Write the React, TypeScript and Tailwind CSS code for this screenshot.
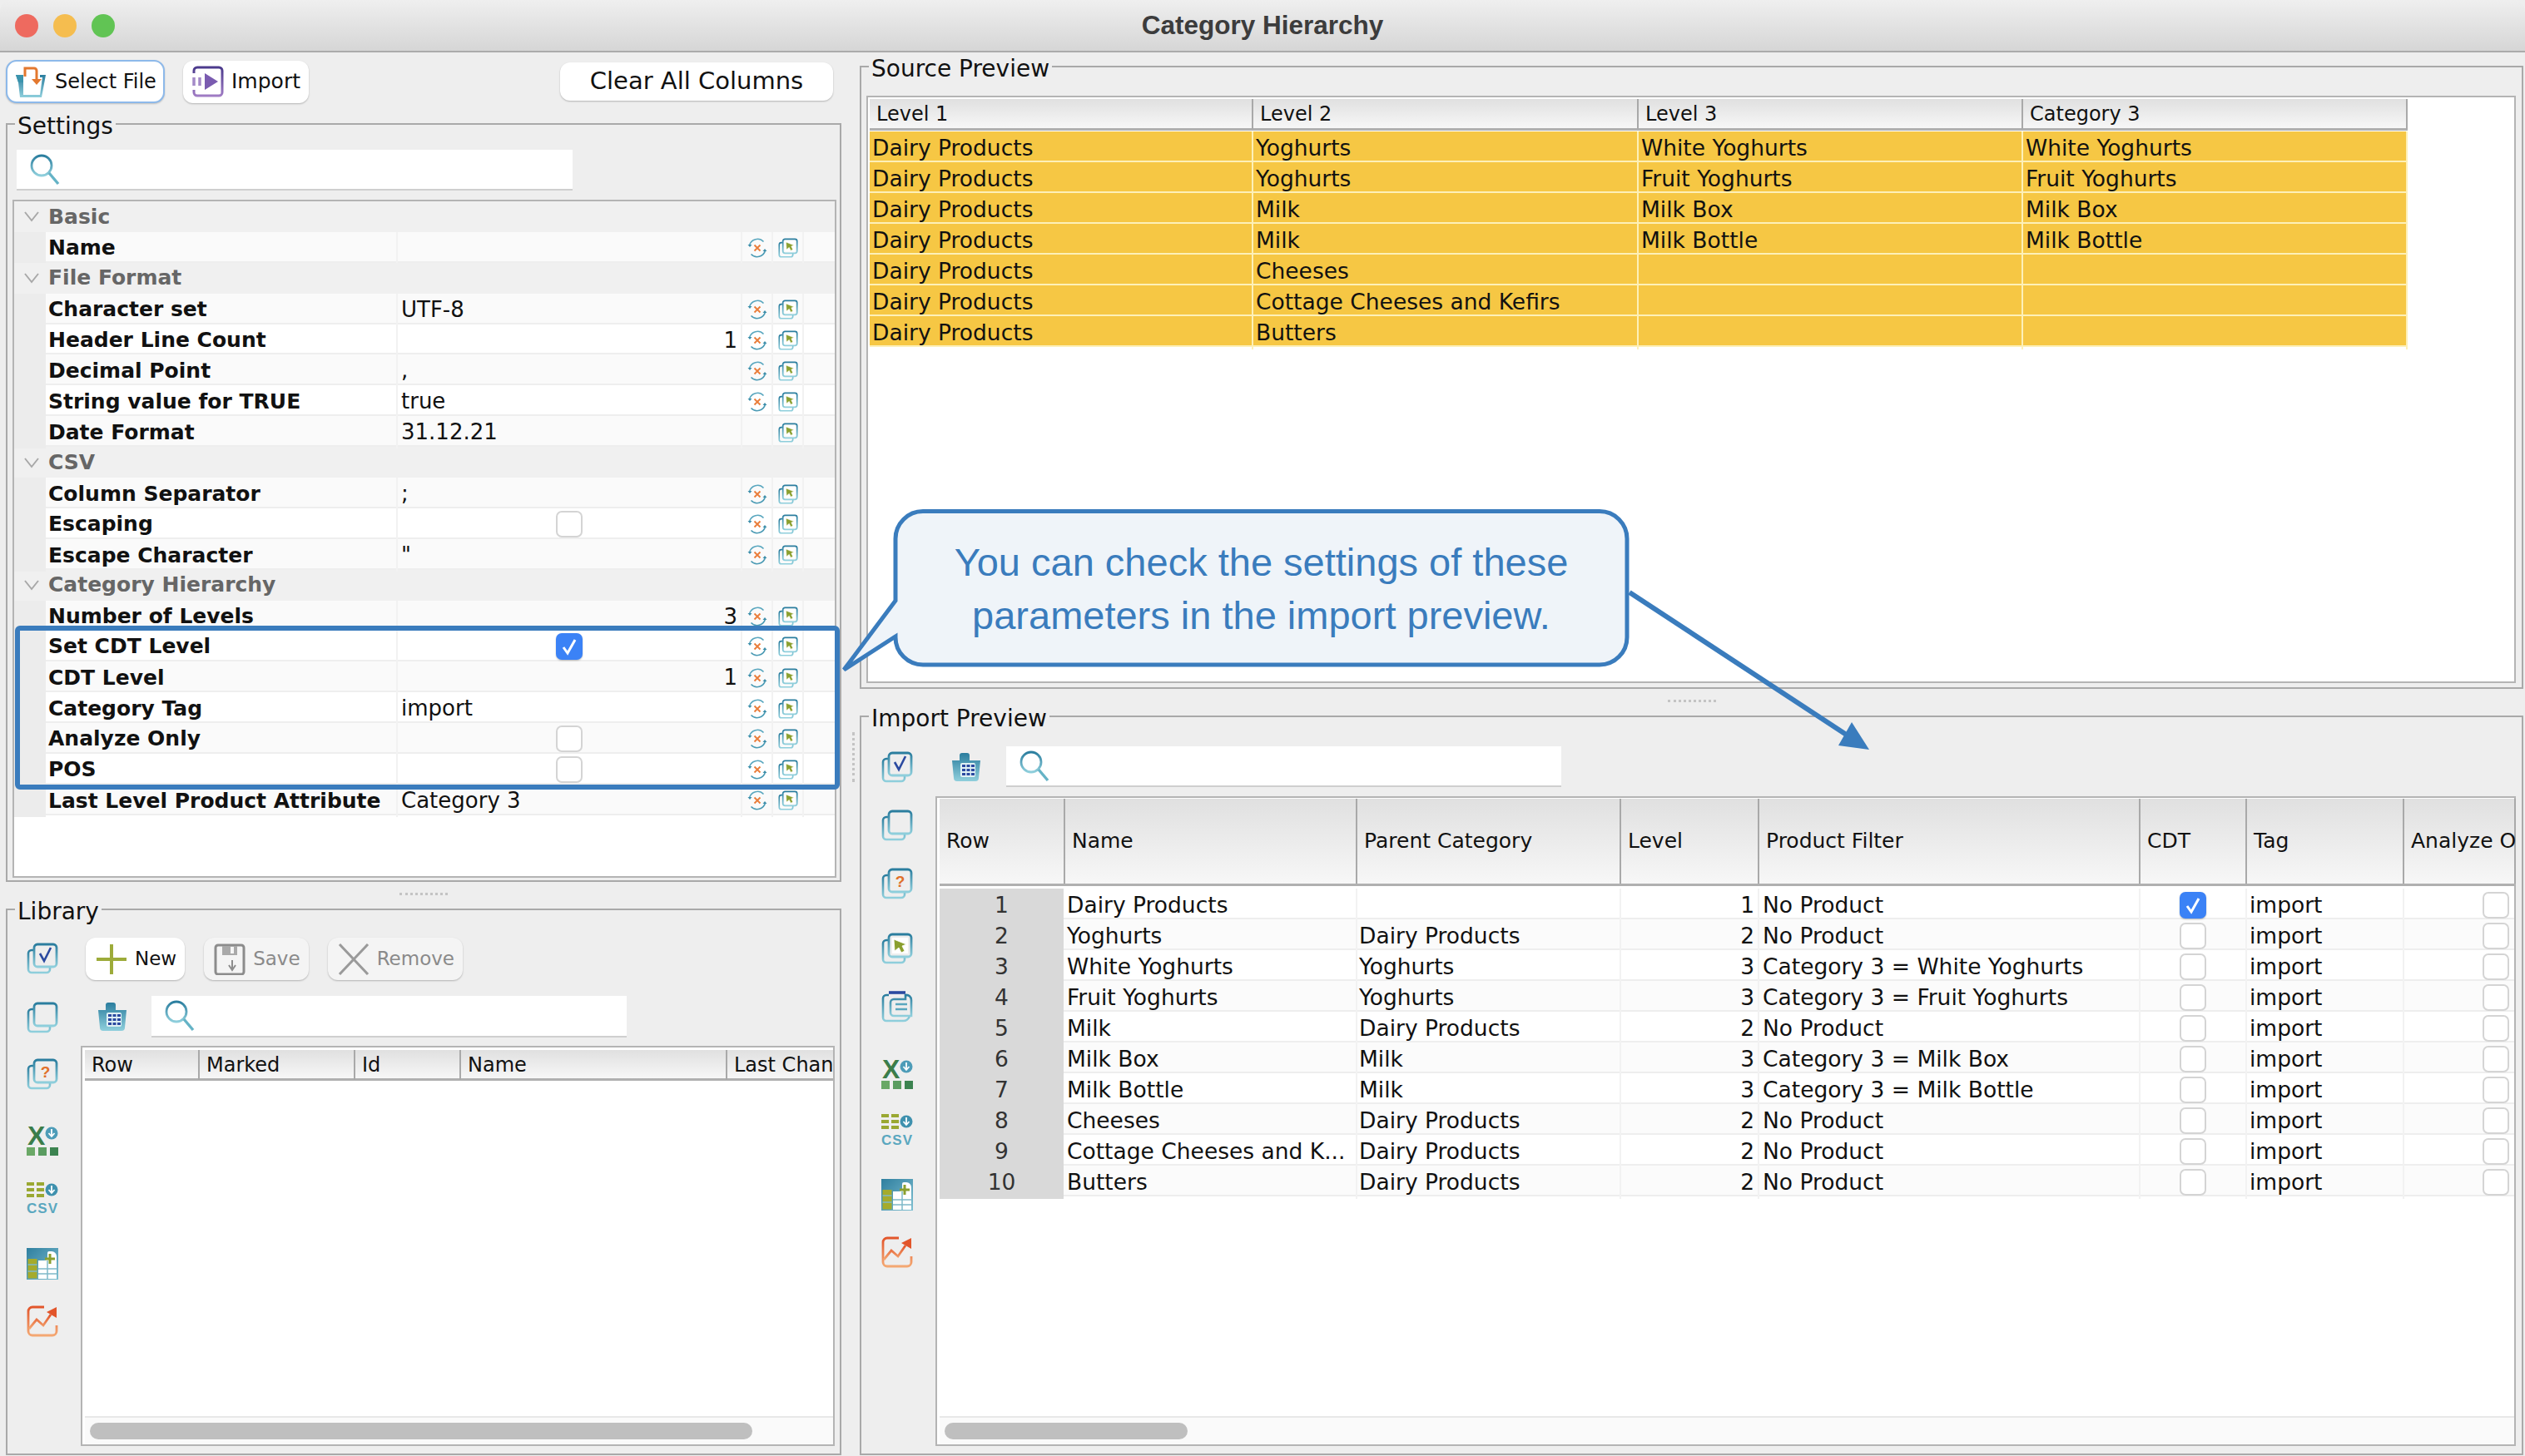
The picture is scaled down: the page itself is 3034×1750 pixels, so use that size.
import type { ReactNode } from 'react'

function Defs() {
  return (
    <svg className="absolute w-0 h-0" aria-hidden="true">
      <defs>
        <linearGradient id="teal" x1="0" y1="0" x2="0" y2="1">
          <stop offset="0" stopColor="#2a7d9e" />
          <stop offset="1" stopColor="#8fcfdc" />
        </linearGradient>
        <linearGradient id="purple" x1="0" y1="0" x2="0" y2="1">
          <stop offset="0" stopColor="#4b3a8c" />
          <stop offset="1" stopColor="#a07cc4" />
        </linearGradient>
        <linearGradient id="orange" x1="0" y1="0" x2="0" y2="1">
          <stop offset="0" stopColor="#e2552a" />
          <stop offset="1" stopColor="#f4a873" />
        </linearGradient>
        <linearGradient id="tablebg" x1="0" y1="0" x2="1" y2="1">
          <stop offset="0" stopColor="#2f7f9f" />
          <stop offset="1" stopColor="#7fc0d2" />
        </linearGradient>
      </defs>
    </svg>
  )
}

function Pages({ size = 38, children }: { size?: number; children?: ReactNode }) {
  return (
    <svg width={size} height={size} viewBox="0 0 38 38" fill="none" className="shrink-0">
      <path d="M9 9H6a4 4 0 0 0-4 4v19a4 4 0 0 0 4 4h18a4 4 0 0 0 4-4v-3" stroke="url(#teal)" strokeWidth="2.6" />
      <rect x="9" y="2" width="27" height="27" rx="4" stroke="url(#teal)" strokeWidth="2.8" />
      {children}
    </svg>
  )
}

const PagesCheck = () => (
  <Pages><path d="M16 13l5 9 8-16" stroke="#2b4aa0" strokeWidth="2.6" /></Pages>
)
const PagesEmpty = () => <Pages />
const PagesQuestion = () => (
  <Pages><text x="22.5" y="23" textAnchor="middle" fontSize="19" fontWeight="700" fill="#e0702a" fontFamily="Liberation Sans, sans-serif">?</text></Pages>
)
const PagesCursor = ({ size = 38 }: { size?: number }) => (
  <Pages size={size}>
    <rect x="13" y="6" width="19" height="19" fill="#fff" />
    <path d="M15 8l15 6-5 2 3 6-4 2-3-6-5 4z" fill="#8a9f2e" stroke="#fff" strokeWidth="0.8" />
  </Pages>
)

const ClipDoc = () => (
  <svg width="38" height="38" viewBox="0 0 38 38" fill="none" className="shrink-0">
    <path d="M9 5H6a4 4 0 0 0-4 4v23a4 4 0 0 0 4 4h20a8 8 0 0 0 8-6" stroke="url(#teal)" strokeWidth="2.6" />
    <path d="M9 2h20" stroke="#2b4aa0" strokeWidth="3.6" />
    <path d="M29 5a6 6 0 0 1 7 6v19H15a4 4 0 0 1-4-4V14a4 4 0 0 1 4-4h14z" stroke="url(#teal)" strokeWidth="2.6" />
    <path d="M17 16h14M17 22h14" stroke="#5aa7bf" strokeWidth="2.6" />
  </svg>
)

const ClipTable = () => (
  <svg width="38" height="38" viewBox="0 0 38 38" fill="none" className="shrink-0">
    <path d="M2 11h9V5a3 3 0 0 1 3-3h6a3 3 0 0 1 3 3v6h13l-2 21a4 4 0 0 1-4 4H8a4 4 0 0 1-4-4z" fill="url(#teal)" />
    <rect x="12" y="14" width="18" height="17" rx="2" fill="#dff0f4" />
    <path d="M14 16h4v3h-4zM19.500 16h4v3h-4zM25 16h4v3h-4zM14 21h4v3h-4zM19.500 21h4v3h-4zM25 21h4v3h-4zM14 26h4v3h-4zM19.500 26h4v3h-4zM25 26h4v3h-4z" fill="#2b4aa0" />
  </svg>
)

const ExcelDown = () => (
  <svg width="38" height="38" viewBox="0 0 38 38" className="shrink-0">
    <text x="1" y="25" fontSize="32" fontWeight="700" fill="#3b7d4a" fontFamily="Liberation Sans, sans-serif">X</text>
    <circle cx="30" cy="11" r="7.5" fill="#4d9cb8" />
    <path d="M30 6v8M26.5 11l3.5 4 3.5-4" stroke="#fff" strokeWidth="1.8" fill="none" />
    <rect x="0" y="28" width="10" height="10" fill="#6aa866" />
    <rect x="14" y="28" width="10" height="10" fill="#5a9c60" />
    <rect x="28" y="28" width="10" height="10" fill="#3c8350" />
  </svg>
)

const CsvDown = () => (
  <svg width="38" height="38" viewBox="0 0 38 38" className="shrink-0">
    <path d="M0 0h9v4H0zM12 0h9v4h-9zM0 7h9v4H0zM12 7h9v4h-9zM0 14h9v4H0zM12 14h9v4h-9z" fill="#9aa832" />
    <circle cx="30" cy="9" r="7.5" fill="#3f91ae" />
    <path d="M30 4v8M26.5 9l3.5 4 3.5-4" stroke="#fff" strokeWidth="1.8" fill="none" />
    <text x="19" y="37" textAnchor="middle" fontSize="17" fontWeight="700" fill="#5aa7bf" letterSpacing="1" fontFamily="Liberation Sans, sans-serif">CSV</text>
  </svg>
)

const TablePlus = () => (
  <svg width="38" height="38" viewBox="0 0 38 38" className="shrink-0">
    <rect width="38" height="38" fill="url(#tablebg)" />
    <rect x="1.5" y="13" width="11" height="23.5" fill="#a5ab2c" />
    <path d="M14 37V15h7a4 4 0 0 0 4-4V6a2 2 0 0 1 2-2h3a6 6 0 0 1 6 6v27z" fill="#fff" />
    <path d="M14 25h23M14 31h23M25 15v22M1.5 20h11M1.5 28h11" stroke="#7fb9c9" strokeWidth="1.5" />
    <path d="M28 7v12M22 13h12" stroke="#8a9f2e" strokeWidth="3" />
  </svg>
)

const ChartUp = () => (
  <svg width="38" height="38" viewBox="0 0 38 38" fill="none" className="shrink-0">
    <path d="M21 2H7a5 5 0 0 0-5 5v24a5 5 0 0 0 5 5h24a5 5 0 0 0 5-5v-7" stroke="url(#orange)" strokeWidth="2.8" />
    <path d="M3 28l9-11 8 7 9-13" stroke="url(#orange)" strokeWidth="2.8" />
    <path d="M24 8l12-6v13z" fill="#e2552a" />
  </svg>
)

const Search = () => (
  <svg width="38" height="38" viewBox="0 0 38 38" fill="none" className="shrink-0">
    <circle cx="15" cy="14" r="12" stroke="url(#teal)" strokeWidth="2.8" />
    <path d="M24 23l11 13" stroke="#65b3c6" strokeWidth="3.4" />
  </svg>
)

const ResetIcon = () => (
  <svg width="24" height="24" viewBox="0 0 24 24" fill="none">
    <path d="M2.500 9A10 10 0 0 1 19.500 4.500" stroke="#5aa7bf" strokeWidth="1.6" />
    <path d="M21.500 15A10 10 0 0 1 4.500 19.500" stroke="#4a9ab4" strokeWidth="1.6" />
    <path d="M0.500 8l2.500 3 2.500-3zM18.500 16l2.500-3 2.500 3z" fill="#3f8faa" />
    <path d="M8.500 8.500l7 7M15.500 8.500l-7 7" stroke="#ea7d3a" strokeWidth="1.9" />
  </svg>
)

const SelectFile = () => (
  <svg width="38" height="38" viewBox="0 0 38 38" fill="none" className="shrink-0">
    <path d="M9 11H0l3 9 2 18h26l5-27h-7v3h3l-3 21H9z" fill="url(#teal)" />
    <path d="M9 11H0l3 9h6z" fill="#3b93ad" />
    <path d="M11 13V3h11a3 3 0 0 1 3 3v13" stroke="#e3782f" strokeWidth="3" />
    <path d="M19 16l6 7 6-7" fill="#e3782f" />
  </svg>
)

const ImportIcon = () => (
  <svg width="38" height="38" viewBox="0 0 38 38" fill="none" className="shrink-0">
    <path d="M2 9V6a4 4 0 0 1 4-4h26a4 4 0 0 1 4 4v26a4 4 0 0 1-4 4H6a4 4 0 0 1-4-4v-3" stroke="url(#purple)" strokeWidth="3" />
    <path d="M2 14v10M9 14v10" stroke="#a48ac8" strokeWidth="3.5" />
    <path d="M15 9l16 10-16 10z" fill="#7a5bb0" />
  </svg>
)

const Plus = () => (
  <svg width="38" height="38" viewBox="0 0 38 38" className="shrink-0">
    <path d="M19 1v36M1 19h36" stroke="#9dab3a" strokeWidth="4" />
  </svg>
)

const Floppy = () => (
  <svg width="38" height="38" viewBox="0 0 38 38" fill="none" className="shrink-0">
    <path d="M5 2h28a3 3 0 0 1 3 3v29a3 3 0 0 1-3 3H5a3 3 0 0 1-3-3V5a3 3 0 0 1 3-3z" stroke="#8c8c8c" strokeWidth="3" />
    <rect x="10" y="3" width="18" height="11" fill="#a9a9a9" />
    <rect x="20" y="4" width="4" height="8" fill="#f5f5f5" />
    <path d="M22 20v10M18 26l4 6 4-6" stroke="#8c8c8c" strokeWidth="2" />
  </svg>
)

const Cross = () => (
  <svg width="38" height="38" viewBox="0 0 38 38" className="shrink-0">
    <path d="M2 1l34 36M36 1L2 37" stroke="#9a9a9a" strokeWidth="3" />
  </svg>
)

function Check({ on }: { on?: boolean }) {
  if (on) {
    return (
      <span className="flex items-center justify-center w-[32px] h-[32px] rounded-[7px] bg-[#3b82f6] shadow-[0_1px_2px_rgba(0,0,0,0.25)]">
        <svg width="22" height="22" viewBox="0 0 22 22" fill="none">
          <path d="M4 12l5 7L18 3" stroke="#fff" strokeWidth="3" />
        </svg>
      </span>
    )
  }
  return <span className="block w-[32px] h-[32px] rounded-[7px] bg-white border-2 border-[#d4d4d4]" />
}

function GroupBox({ title, className, children }: { title: string; className: string; children: ReactNode }) {
  return (
    <fieldset className={`min-w-0 border-2 border-[#a9a9a9] ${className}`}>
      <legend className="ml-[9px] px-[3px] h-[32px] pt-[3px] leading-[32px] text-[28px] text-[#111]">{title}</legend>
      {children}
    </fieldset>
  )
}

function SearchBox({ className }: { className: string }) {
  return (
    <div className={`flex items-center pl-[15px] bg-white border-b-2 border-[#cfcfcf] ${className}`}>
      <Search />
    </div>
  )
}

function ToolButton({ icon, label, disabled }: { icon: ReactNode; label: string; disabled?: boolean }) {
  return (
    <button className={`flex items-center gap-[9px] h-[51px] pl-[12px] pr-[10px] rounded-[12px] text-[23px] shadow-[0_1px_2px_rgba(0,0,0,0.25)] ${disabled ? 'bg-[#f4f4f4] text-[#8a8a8a]' : 'bg-white text-[#111]'}`}>
      {icon}
      {label}
    </button>
  )
}

type PropRow =
  | { section: string }
  | { name: string; value?: string; num?: string; check?: boolean; noReset?: boolean }

const SETTINGS: PropRow[] = [
  { section: 'Basic' },
  { name: 'Name' },
  { section: 'File Format' },
  { name: 'Character set', value: 'UTF-8' },
  { name: 'Header Line Count', num: '1' },
  { name: 'Decimal Point', value: ',' },
  { name: 'String value for TRUE', value: 'true' },
  { name: 'Date Format', value: '31.12.21', noReset: true },
  { section: 'CSV' },
  { name: 'Column Separator', value: ';' },
  { name: 'Escaping', check: false },
  { name: 'Escape Character', value: '"' },
  { section: 'Category Hierarchy' },
  { name: 'Number of Levels', num: '3' },
  { name: 'Set CDT Level', check: true },
  { name: 'CDT Level', num: '1' },
  { name: 'Category Tag', value: 'import' },
  { name: 'Analyze Only', check: false },
  { name: 'POS', check: false },
  { name: 'Last Level Product Attribute', value: 'Category 3' },
]

function SettingsRow({ row, index }: { row: PropRow; index: number }) {
  if ('section' in row) {
    return (
      <div className="flex items-center h-[36.9px] bg-[#f0f0f0]">
        <svg width="20" height="14" viewBox="0 0 20 14" fill="none" className="ml-[11px] mr-[10px]">
          <path d="M2 2l8 10 8-10" stroke="#a8a8a8" strokeWidth="2" />
        </svg>
        <span className="text-[25px] font-bold text-[#666]">{row.section}</span>
      </div>
    )
  }
  const cell = 'flex items-center h-full border-r-2 border-[#f2f2f2] min-w-0'
  return (
    <div className={`grid grid-cols-[38px_423px_414px_37px_37px_1fr] h-[36.9px] border-b-2 border-[#eeeeee] ${index % 2 ? 'bg-[#fafafa]' : 'bg-white'}`}>
      <div className="h-full bg-[#ececec]" />
      <div className={`${cell} pl-[3px] text-[25px] font-bold text-[#111] whitespace-nowrap`}>{row.name}</div>
      <div className={`${cell} px-[4px] text-[26px] text-[#111] ${row.num ? 'justify-end' : ''} ${row.check !== undefined ? 'justify-center' : ''}`}>
        {row.value}
        {row.num}
        {row.check !== undefined && <Check on={row.check} />}
      </div>
      <div className={`${cell} justify-center`}>{!row.noReset && <ResetIcon />}</div>
      <div className={`${cell} justify-center`}><PagesCursor size={24} /></div>
      <div />
    </div>
  )
}

function HeadCell({ label, className }: { label: string; className?: string }) {
  return (
    <div className={`flex items-center h-full pl-[8px] border-r-2 border-[#a9a9a9] text-[25px] text-[#111] whitespace-nowrap ${className ?? ''}`}>
      {label}
    </div>
  )
}

const headBg = 'bg-gradient-to-b from-[#e0e0e0] to-[#f7f7f7] border-b-[3px] border-[#b0b0b0]'

function ScrollStrip({ thumb }: { thumb: string }) {
  return (
    <div className="flex items-center h-[34px] pl-[6px] bg-[#fafafa] border-t-2 border-[#e8e8e8]">
      <div className={`h-[20px] rounded-full bg-[#bfbfbf] ${thumb}`} />
    </div>
  )
}

const SOURCE_ROWS = [
  ['Dairy Products', 'Yoghurts', 'White Yoghurts', 'White Yoghurts'],
  ['Dairy Products', 'Yoghurts', 'Fruit Yoghurts', 'Fruit Yoghurts'],
  ['Dairy Products', 'Milk', 'Milk Box', 'Milk Box'],
  ['Dairy Products', 'Milk', 'Milk Bottle', 'Milk Bottle'],
  ['Dairy Products', 'Cheeses', '', ''],
  ['Dairy Products', 'Cottage Cheeses and Kefirs', '', ''],
  ['Dairy Products', 'Butters', '', ''],
]

const IMPORT_ROWS = [
  ['Dairy Products', '', '1', 'No Product'],
  ['Yoghurts', 'Dairy Products', '2', 'No Product'],
  ['White Yoghurts', 'Yoghurts', '3', 'Category 3 = White Yoghurts'],
  ['Fruit Yoghurts', 'Yoghurts', '3', 'Category 3 = Fruit Yoghurts'],
  ['Milk', 'Dairy Products', '2', 'No Product'],
  ['Milk Box', 'Milk', '3', 'Category 3 = Milk Box'],
  ['Milk Bottle', 'Milk', '3', 'Category 3 = Milk Bottle'],
  ['Cheeses', 'Dairy Products', '2', 'No Product'],
  ['Cottage Cheeses and K...', 'Dairy Products', '2', 'No Product'],
  ['Butters', 'Dairy Products', '2', 'No Product'],
]

const sourceCols = 'grid grid-cols-[461px_463px_462px_462px]'
const importCols = 'grid grid-cols-[151px_351px_317px_166px_458px_128px_189px_134px]'

function SourceTable() {
  return (
    <div className="h-[706px] ml-[6px] mr-[7px] mt-[19px] pl-[2px] pt-[2px] bg-white border-2 border-[#b4b4b4]">
      <div className={`${sourceCols} w-[1848px] h-[38px] ${headBg}`}>
        {['Level 1', 'Level 2', 'Level 3', 'Category 3'].map(h => <HeadCell key={h} label={h} className="!text-[24px]" />)}
      </div>
      <div className="mt-[1px] w-[1848px]">
        {SOURCE_ROWS.map((r, i) => (
          <div key={i} className={`${sourceCols} h-[37px] bg-[#f6c744] border-b-2 border-[#fdf0b8]`}>
            {r.map((c, j) => (
              <div key={j} className="flex items-center pl-[3px] border-r-2 border-[#fdf0b8] text-[26.500px] text-[#111] whitespace-nowrap">{c}</div>
            ))}
          </div>
        ))}
      </div>
    </div>
  )
}

function ImportTable() {
  return (
    <div className="flex flex-col h-[781px] mt-[11px] pl-[3px] pt-[1px] bg-white border-2 border-[#b4b4b4]">
      <div className={`${importCols} h-[105px] ${headBg}`}>
        {['Row', 'Name', 'Parent Category', 'Level', 'Product Filter', 'CDT', 'Tag', 'Analyze O'].map(h => <HeadCell key={h} label={h} />)}
      </div>
      <div className="flex-1 pt-[3px]">
        {IMPORT_ROWS.map((r, i) => (
          <div key={i} className={`${importCols} h-[37px] border-b-2 border-[#eeeeee] text-[26.500px] text-[#111] ${i % 2 ? 'bg-[#fbfbfb]' : 'bg-white'}`}>
            <div className="flex items-center justify-center mr-[2px] bg-[#d9d9d9] text-[#333]">{i + 1}</div>
            <div className="flex items-center pl-[2px] border-r-2 border-[#f2f2f2] whitespace-nowrap overflow-hidden">{r[0]}</div>
            <div className="flex items-center pl-[2px] border-r-2 border-[#f2f2f2] whitespace-nowrap">{r[1]}</div>
            <div className="flex items-center justify-end pr-[4px] border-r-2 border-[#f2f2f2]">{r[2]}</div>
            <div className="flex items-center pl-[4px] border-r-2 border-[#f2f2f2] whitespace-pre">{r[3]}</div>
            <div className="flex items-center justify-center border-r-2 border-[#f2f2f2]"><Check on={i === 0} /></div>
            <div className="flex items-center pl-[3px] border-r-2 border-[#f2f2f2]">import</div>
            <div className="flex items-center justify-end pr-[8px]"><Check /></div>
          </div>
        ))}
      </div>
      <ScrollStrip thumb="w-[292px]" />
    </div>
  )
}

function Splitter() {
  return (
    <div className="h-[17px] pt-[13px]">
      <div className="w-[58px] mx-auto border-t-[3px] border-dotted border-[#c4c4c4]" />
    </div>
  )
}

export default function App() {
  return (
    <div className="relative w-[3034px] h-[1750px] overflow-hidden bg-[#eeeeee] font-['DejaVu_Sans',sans-serif]">
      <Defs />

      {/* Title bar */}
      <div className="grid grid-cols-[1fr_auto_1fr] items-center h-[63px] rounded-t-[14px] bg-gradient-to-b from-[#efefef] to-[#d6d6d6] border-b-2 border-[#ababab]">
        <div className="flex gap-[18px] pl-[18px]">
          <span className="w-[28px] h-[28px] rounded-full bg-[#ee6a5f]" />
          <span className="w-[28px] h-[28px] rounded-full bg-[#f5bd4f]" />
          <span className="w-[28px] h-[28px] rounded-full bg-[#61c454]" />
        </div>
        <div className="font-['Liberation_Sans',sans-serif] text-[31.500px] font-bold text-[#3c3c3c]">Category Hierarchy</div>
        <div />
      </div>

      <div className="flex h-[1687px]">
        {/* Left column */}
        <div className="w-[1024px] shrink-0 pl-[7px] pr-[13px]">
          <div className="flex items-center h-[70px]">
            <button className="flex items-center gap-[9px] w-[191px] h-[52px] pl-[10px] rounded-[13px] bg-white border-2 border-[#8db9ea] text-[24px] text-[#111] shadow-[0_1px_2px_rgba(0,0,0,0.2)]">
              <SelectFile />
              Select File
            </button>
            <button className="flex items-center gap-[9px] w-[151px] h-[51px] ml-[22px] pl-[11px] rounded-[12px] bg-white text-[25px] text-[#111] shadow-[0_1px_2px_rgba(0,0,0,0.25)]">
              <ImportIcon />
              Import
            </button>
            <button className="w-[328px] h-[46px] ml-auto mr-[10px] rounded-[12px] bg-white text-[29px] text-[#111] shadow-[0_1px_2px_rgba(0,0,0,0.25)]">
              Clear All Columns
            </button>
          </div>

          <GroupBox title="Settings" className="h-[927px]">
            <SearchBox className="ml-[11px] mt-[15px] w-[668px] h-[49px]" />
            <div className="h-[815px] ml-[6px] mr-[4px] mt-[11px] bg-white border-2 border-[#b4b4b4]">
              {SETTINGS.map((row, i) => <SettingsRow key={i} row={row} index={i} />)}
            </div>
          </GroupBox>

          <Splitter />

          <GroupBox title="Library" className="h-[672px]">
            <div className="flex">
              <div className="flex flex-col w-[88px] pl-[23px]">
                <div className="mt-[24px]"><PagesCheck /></div>
                <div className="mt-[33px]"><PagesEmpty /></div>
                <div className="mt-[30px]"><PagesQuestion /></div>
                <div className="mt-[41px]"><ExcelDown /></div>
                <div className="mt-[32px]"><CsvDown /></div>
                <div className="mt-[41px]"><TablePlus /></div>
                <div className="mt-[31px]"><ChartUp /></div>
              </div>
              <div className="flex-1 min-w-0 pr-[6px] pt-[18px]">
                <div className="flex gap-[23px] ml-[6px]">
                  <ToolButton icon={<Plus />} label="New" />
                  <ToolButton icon={<Floppy />} label="Save" disabled />
                  <ToolButton icon={<Cross />} label="Remove" disabled />
                </div>
                <div className="flex items-center mt-[19px] ml-[19px]">
                  <ClipTable />
                  <SearchBox className="ml-[28px] w-[571px] h-[50px]" />
                </div>
                <div className="flex flex-col h-[481px] mt-[10px] pl-[3px] pt-[3px] bg-white border-2 border-[#b4b4b4]">
                  <div className={`grid grid-cols-[138px_187px_127px_320px_1fr] h-[37px] ${headBg}`}>
                    {['Row', 'Marked', 'Id', 'Name'].map(h => <HeadCell key={h} label={h} className="!text-[24px]" />)}
                    <HeadCell label="Last Chan" className="!text-[24px] !border-r-0" />
                  </div>
                  <div className="flex-1" />
                  <ScrollStrip thumb="w-[796px]" />
                </div>
              </div>
            </div>
          </GroupBox>
        </div>

        {/* Right column */}
        <div className="flex-1 min-w-0 pl-[9px] pr-[2px]">
          <GroupBox title="Source Preview" className="h-[764px] mt-[1px]">
            <SourceTable />
          </GroupBox>

          <Splitter />

          <GroupBox title="Import Preview" className="h-[904px]">
            <div className="flex">
              <div className="flex flex-col w-[89px] pl-[24px]">
                <div className="mt-[26px]"><PagesCheck /></div>
                <div className="mt-[32px]"><PagesEmpty /></div>
                <div className="mt-[32px]"><PagesQuestion /></div>
                <div className="mt-[40px]"><PagesCursor /></div>
                <div className="mt-[32px]"><ClipDoc /></div>
                <div className="mt-[42px]"><ExcelDown /></div>
                <div className="mt-[30px]"><CsvDown /></div>
                <div className="mt-[40px]"><TablePlus /></div>
                <div className="mt-[31px]"><ChartUp /></div>
              </div>
              <div className="flex-1 min-w-0 pr-[7px] pt-[20px]">
                <div className="flex items-center ml-[18px]">
                  <ClipTable />
                  <SearchBox className="ml-[29px] w-[667px] h-[49px]" />
                </div>
                <ImportTable />
              </div>
            </div>
          </GroupBox>
        </div>
      </div>

      {/* Vertical splitter grip */}
      <div className="absolute left-[1024px] top-[880px] h-[60px] border-l-[3px] border-dotted border-[#c4c4c4]" />

      {/* Annotation overlay */}
      <div className="absolute left-[18px] top-[752px] w-[991px] h-[197px] border-[6px] border-[#3a7cbd] rounded-[6px] pointer-events-none" />
      <svg className="absolute inset-0 pointer-events-none" width="3034" height="1750" viewBox="0 0 3034 1750" fill="none">
        <path d="M1958 712L2220 884" stroke="#3a7cbd" strokeWidth="6" />
        <path d="M2246 901L2209 896L2225 868Z" fill="#3a7cbd" />
        <path d="M1109 614.500H1922a33 33 0 0 1 33 33V766a33 33 0 0 1-33 33H1109a33 33 0 0 1-33-33L1076 765L1014 805L1076 722V647.500a33 33 0 0 1 33-33Z" fill="#eff4f9" stroke="#3a7cbd" strokeWidth="5" />
      </svg>
      <div className="absolute left-[1073px] top-[644px] w-[885px] text-center font-['Liberation_Sans',sans-serif] text-[47px] leading-[64px] text-[#3a7cbd]">
        You can check the settings of these<br />parameters in the import preview.
      </div>
    </div>
  )
}
